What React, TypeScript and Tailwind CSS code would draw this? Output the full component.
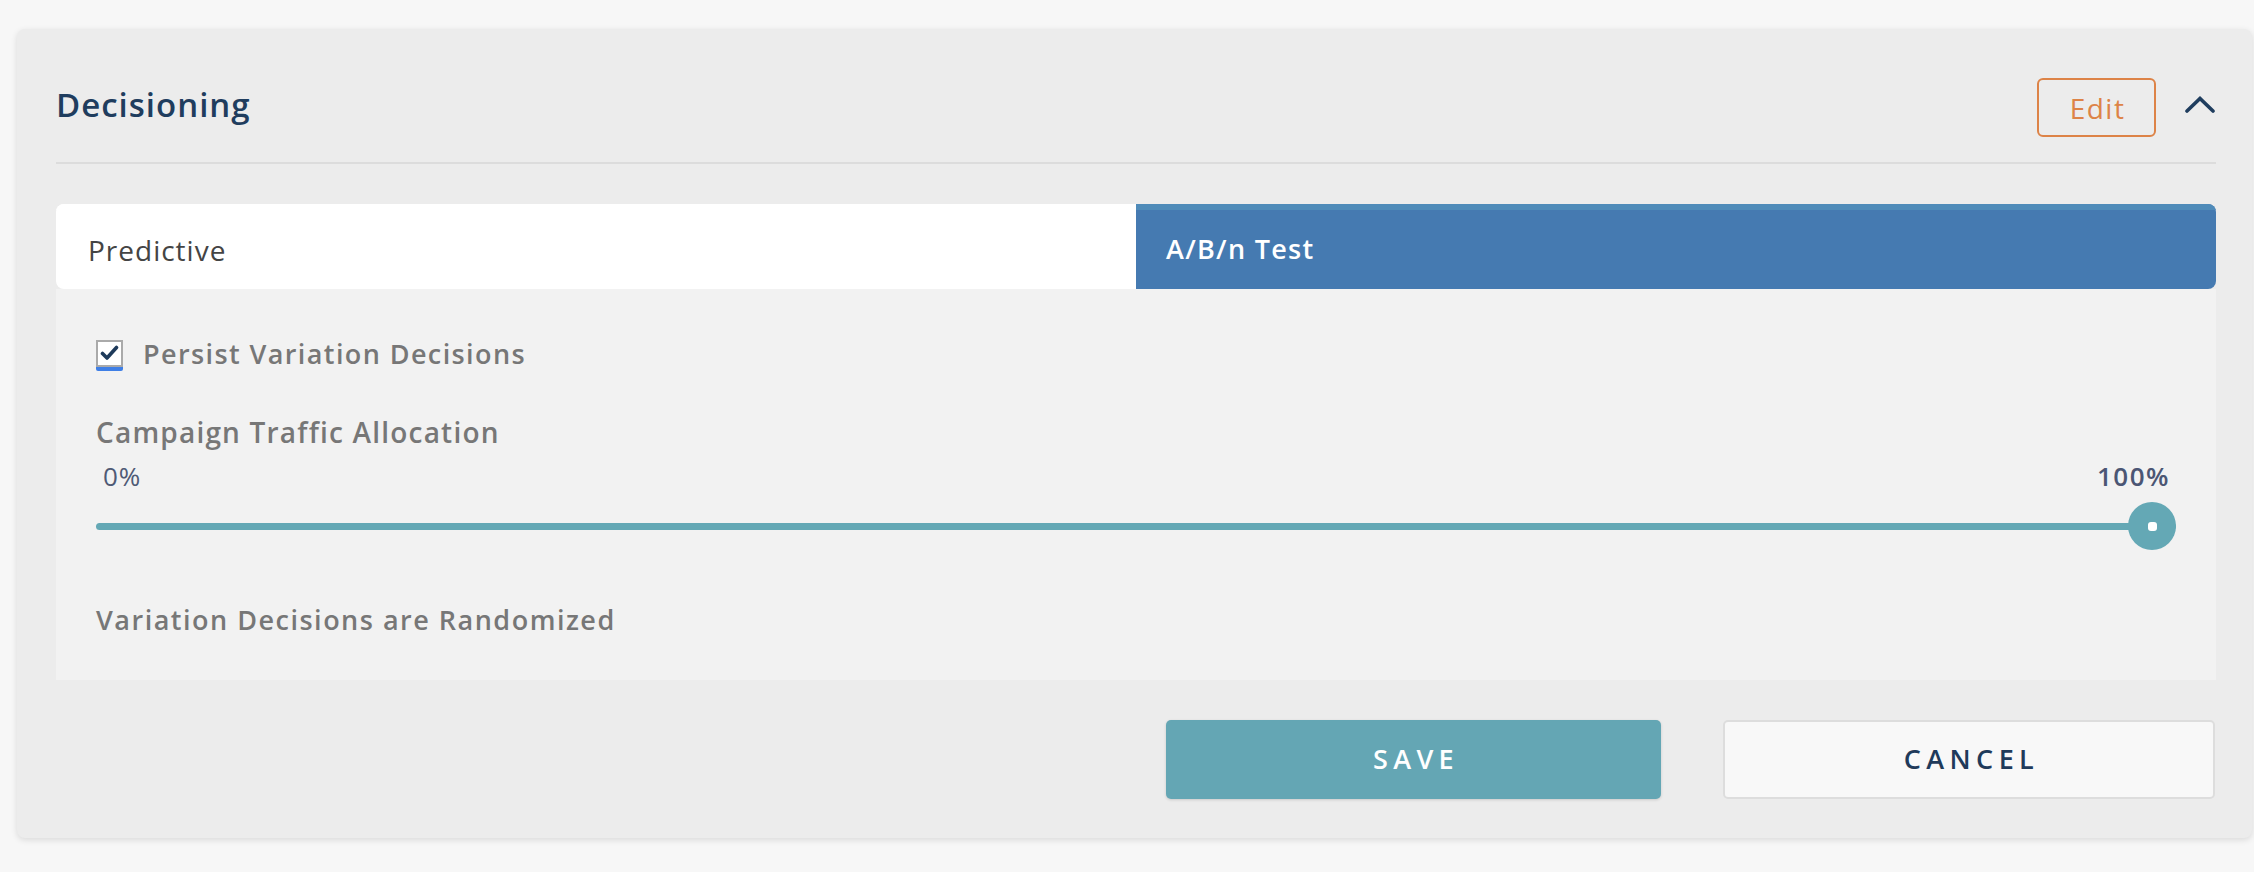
import React from "react";

export default function App() {
  const font = { fontFamily: '"Open Sans", "Noto Sans", sans-serif' };
  return (
    <div className="w-full h-[872px] bg-[#f7f7f7] pt-[29px] pl-[17px] pr-[2px]" style={font}>
      <div className="h-[809px] bg-[#ececec] rounded-lg shadow-[0_2px_6px_rgba(0,0,0,0.12)] pl-[39px] pr-[36px] pt-[49px] pb-[39px] flex flex-col">
        {/* Header */}
        <div className="h-[59px] flex items-center justify-between">
          <h2 className="pb-[6px] text-[33px] leading-none font-semibold text-[#1f3d5e] tracking-[1px]">Decisioning</h2>
          <div className="flex items-center">
            <button className="w-[119px] h-[59px] border-2 border-[#dd8347] rounded-[6px] text-[#dd8347] text-[28px] font-normal leading-none tracking-[1.5px] pl-[2px]">
              Edit
            </button>
            <svg className="ml-[29px] mr-[1px] mb-[5px]" width="30" height="20" viewBox="0 0 30 20">
              <polyline points="2,16 15,3.5 28,16" fill="none" stroke="#1f3d5e" strokeWidth="3.6" strokeLinecap="round" strokeLinejoin="miter" />
            </svg>
          </div>
        </div>
        <div className="mt-[25px] h-[2px] bg-[#dcdcdc]" />

        {/* Tabs */}
        <div className="mt-[40px] h-[85px] grid grid-cols-2 rounded-t-lg rounded-b-lg overflow-hidden">
          <div className="bg-white border-t-[6px] border-white flex items-center pl-[32px] text-[28px] tracking-[1px] text-[#444444]">Predictive</div>
          <div className="bg-[#457ab1] border-t-[6px] border-[#4f8bb9] flex items-center pl-[30px] text-[27px] font-semibold tracking-[1.3px] text-white">
            A/B/n Test
          </div>
        </div>

        {/* Panel */}
        <div className="h-[391px] bg-[#f2f2f2] pl-[40px] pr-[40px] pt-[45px] flex flex-col">
          <div className="h-[40px] flex items-center">
            <div className="relative w-[27px] h-[31px] mt-[2px]">
              <div className="w-[27px] h-[27px] border-2 border-[#aaaaaa] bg-white flex items-center justify-center">
                <svg width="19" height="16" viewBox="0 0 19 16">
                  <polyline points="2.5,8.5 7,13 16.5,2.5" fill="none" stroke="#1e3a5a" strokeWidth="3.6" strokeLinecap="round" strokeLinejoin="round" />
                </svg>
              </div>
              <div className="absolute left-0 bottom-0 w-[27px] h-[4px] bg-[#3f7fe6] rounded-b-[2px]" />
            </div>
            <span className="ml-[20px] text-[27px] font-semibold tracking-[1.4px] text-[#777777]">Persist Variation Decisions</span>
          </div>

          <div className="mt-[38px] h-[40px] flex items-center text-[28px] font-semibold tracking-[1.2px] text-[#777777]">
            Campaign Traffic Allocation
          </div>

          <div className="mt-[6px] h-[36px] flex items-center justify-between text-[26px]">
            <span className="ml-[7px] text-[#4f5a75] tracking-[1px]">0%</span>
            <span className="mr-[6px] font-semibold tracking-[1.5px] text-[#4b5674]">100%</span>
          </div>

          <div className="mt-[8px] h-[48px] relative flex items-center">
            <div className="w-full h-[7px] rounded-full bg-[#64a8b5]" />
            <div className="absolute right-0 top-0 w-[48px] h-[48px] rounded-full bg-[#64a8b5] flex items-center justify-center">
              <div className="w-[9px] h-[9px] rounded-[3px] bg-white" />
            </div>
          </div>

          <div className="mt-[50px] h-[40px] flex items-center text-[27px] font-semibold tracking-[1.5px] text-[#777777]">
            Variation Decisions are Randomized
          </div>
        </div>

        {/* Buttons */}
        <div className="mt-[40px] h-[79px] flex justify-end gap-[62px] pr-[1px]">
          <button className="w-[495px] h-[79px] rounded-[5px] bg-[#64a6b4] shadow-[0_1px_3px_rgba(0,0,0,0.15)] text-white text-[27px] font-semibold tracking-[5.4px] pl-[5px]">
            SAVE
          </button>
          <button className="w-[492px] h-[79px] rounded-[5px] bg-[#f8f8f8] border-2 border-[#dddddd] text-[#1f3a5a] text-[27px] font-semibold tracking-[5.4px] pl-[5px]">
            CANCEL
          </button>
        </div>
      </div>
    </div>
  );
}
